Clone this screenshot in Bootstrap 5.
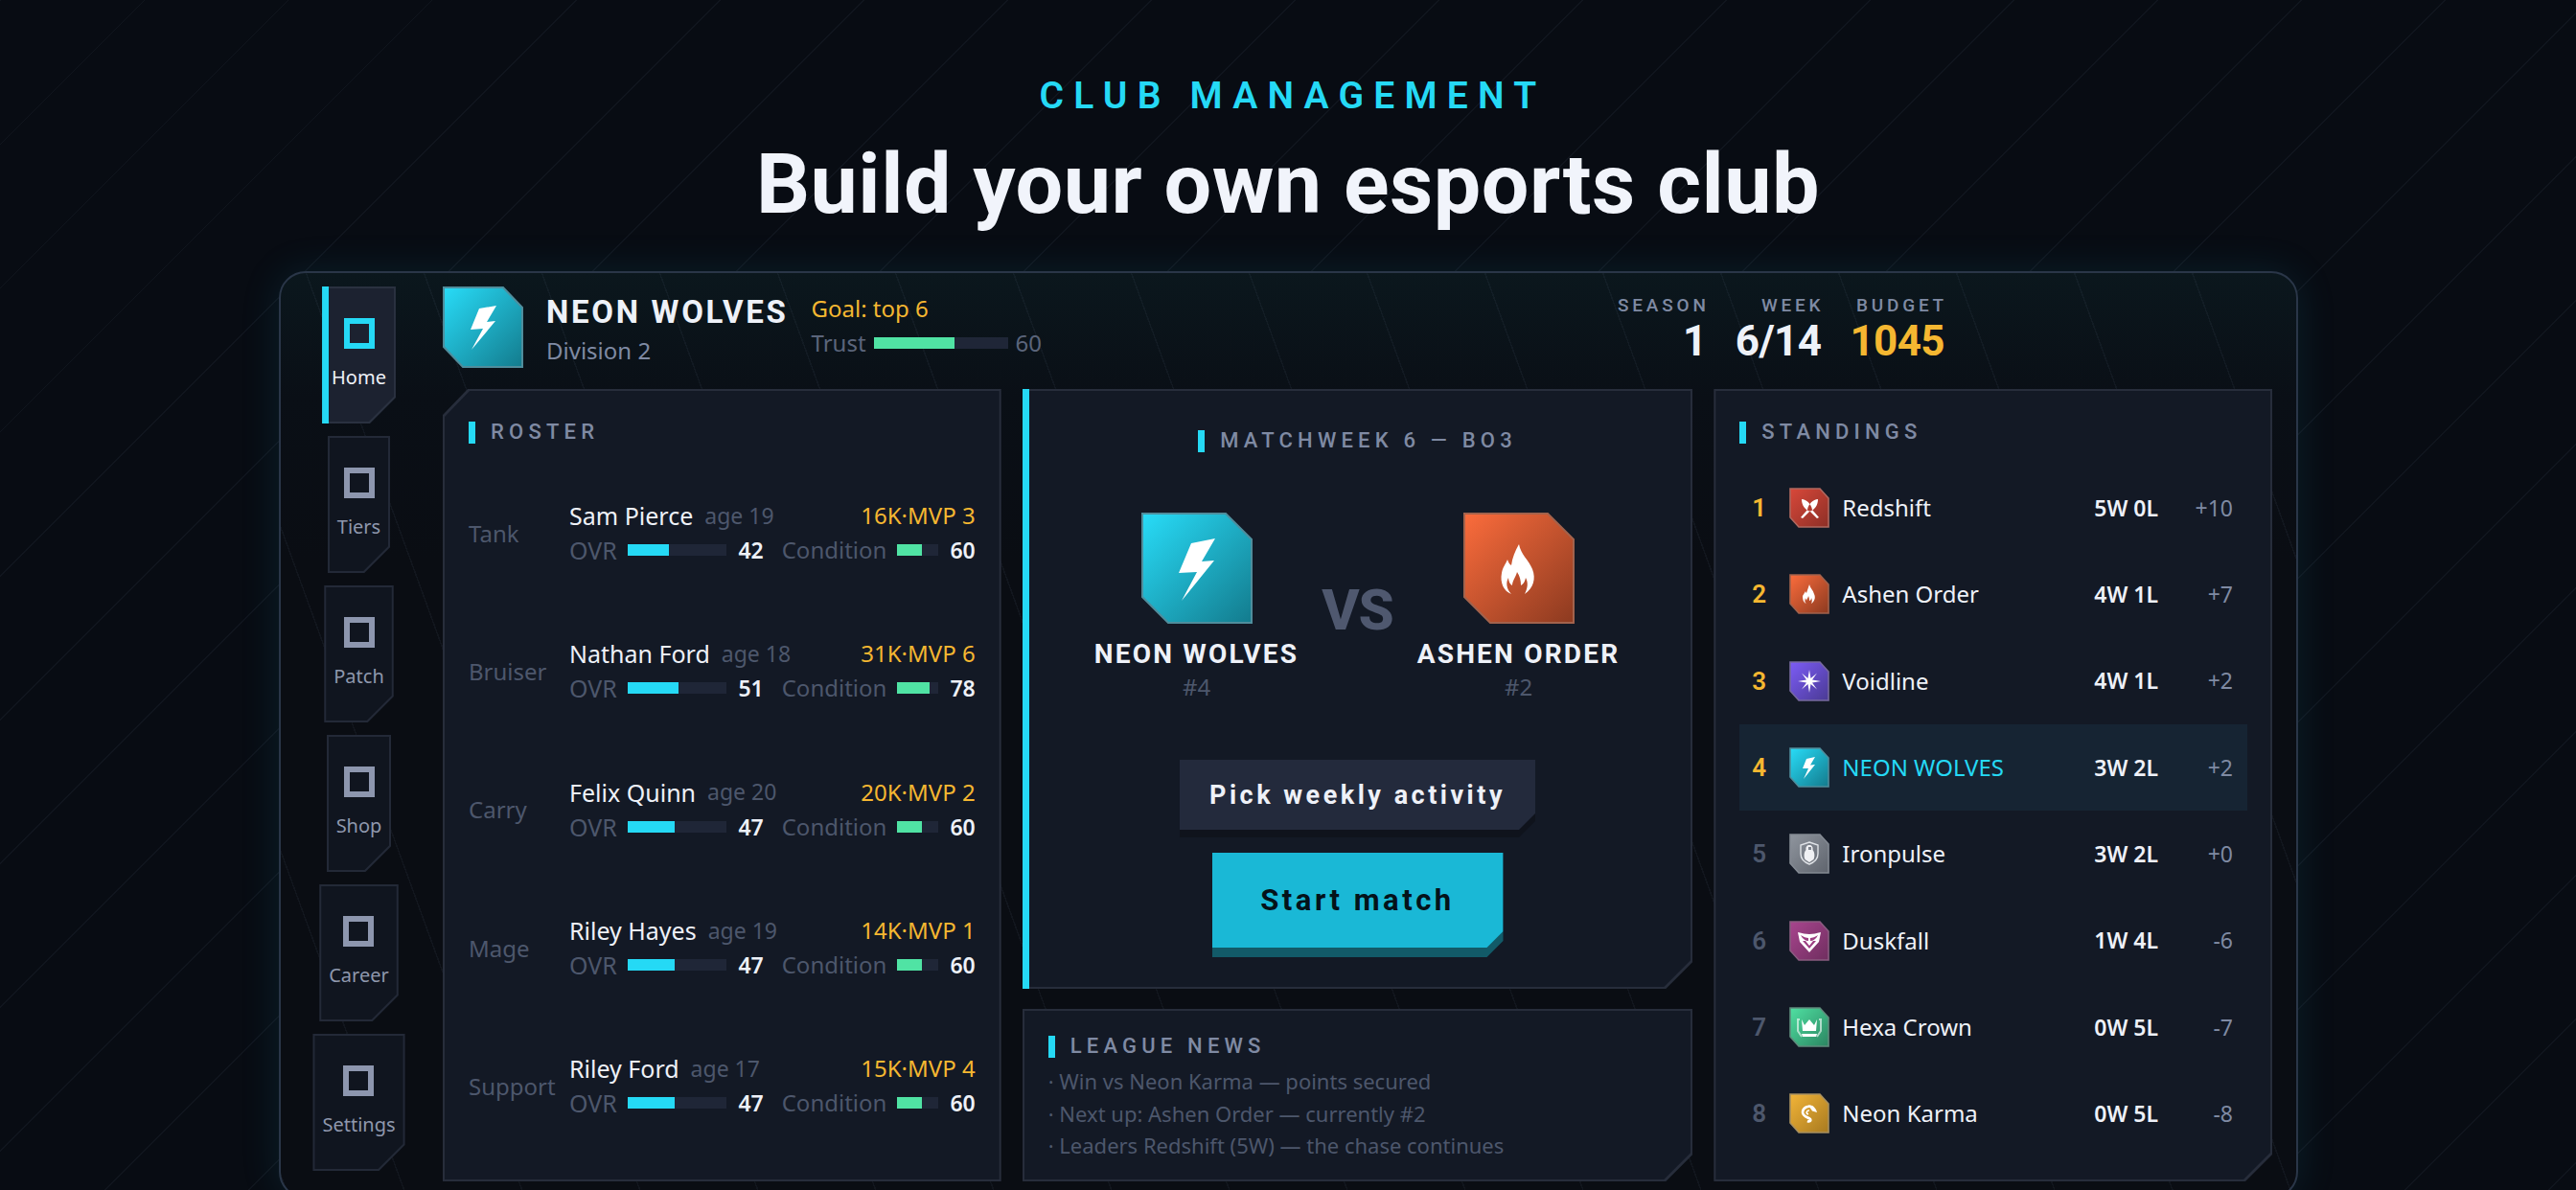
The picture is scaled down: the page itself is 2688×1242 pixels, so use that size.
<!DOCTYPE html>
<html lang="en">
<head>
  <meta charset="UTF-8" />
  <meta name="viewport" content="width=device-width, initial-scale=1" />
  <title>Build your own esports club</title>
  <link href="https://cdn.jsdelivr.net/npm/bootstrap@5.3.2/dist/css/bootstrap.min.css" rel="stylesheet"/>
  <style>
    :root {
      --cyan: #25d9f5;
      --gold: #f5b731;
      --green: #50e3a4;
      --soft: #7f8aa3;
      --dim: #4d576c;
      --ink: #eef1f8;
      --head: "Roboto", "Liberation Sans", sans-serif;
      --text: "Noto Sans", "Liberation Sans", sans-serif;
    }
    html, body { height: 1242px; overflow: hidden; }
    body {
      background-color: #080c13;
      background-image: repeating-linear-gradient(135deg, rgba(120,140,170,.07) 0, rgba(120,140,170,.07) 1.4px, transparent 1.4px, transparent 106.07px);
      font-family: var(--text);
      color: var(--ink);
    }
    .hero { height: 283px; padding-top: 73px; }
    .kicker { font: 600 39px/54px var(--head); letter-spacing: 10.2px; color: var(--cyan); margin-right: -10px; }
    .hero-title { font: 700 88px/100px var(--head); letter-spacing: .5px; color: #f1f4fb; margin: 15px 0 0; }
    .frame {
      width: 2107px; height: 968px; margin-left: 291px; padding: 14px 24px 16px 0;
      border: 2px solid #2a3648; border-radius: 28px;
      background-color: #0a0d13;
      background-image:
        repeating-linear-gradient(70deg, transparent 0, transparent 7px, rgba(120,140,170,.07) 7px, rgba(120,140,170,.07) 8.4px, transparent 8.4px, transparent 115.6px),
        linear-gradient(180deg, #0b171d 0, #0a0f16 130px, #0a0d13 300px);
      box-shadow: 0 0 42px rgba(30,160,190,.13);
    }
    .side { width: 163px; margin-right: 6px; gap: 13px; }
    .tab {
      position: relative; height: 143px; padding: 33px 10px 0; color: #8f98ad; font-size: 20px; line-height: 28px;
      background: #232937;
      clip-path: polygon(0 0, 100% 0, 100% calc(100% - 27px), calc(100% - 27px) 100%, 0 100%);
    }
    .tab::before {
      content: ""; position: absolute; inset: 2px; background: #10151f;
      clip-path: polygon(0 0, 100% 0, 100% calc(100% - 26px), calc(100% - 26px) 100%, 0 100%);
    }
    .tab > * { position: relative; }
    .tab-on { color: var(--ink); background: #2a3140; }
    .tab-on::before { background: #1c2230; }
    .tab-on::after { content: ""; position: absolute; left: 0; top: 0; bottom: 0; width: 7px; background: var(--cyan); }
    .tab-mark { width: 32px; height: 32px; border: 6px solid #8d96ae; margin: 0 auto 16px; }
    .tab-on .tab-mark { border-color: var(--cyan); }
    .main-col { width: 1909px; }
    .topbar { height: 107px; }
    .crest { flex: none; display: block; }
    .club-name { font: 700 33px/36px var(--head); letter-spacing: 2.7px; color: var(--ink); margin-top: 1px; }
    .club-div { font-size: 24px; line-height: 30px; color: var(--soft); margin-top: 7px; }
    .goal-box { margin-left: 24px; font-size: 24px; }
    .goal-text { color: var(--gold); line-height: 30px; }
    .trust-text { color: #5b657b; line-height: 30px; margin-top: 6px; }
    .track { background: #1f2637; height: 12px; }
    .track > div { height: 100%; }
    .fill-c { background: var(--cyan); }
    .fill-g { background: var(--green); }
    .stat-row { margin-left: auto; margin-right: 342px; gap: 30px; text-align: right; }
    .stat-lbl { font: 500 19px/24px var(--head); letter-spacing: 3.8px; color: var(--soft); margin-right: -3px; }
    .stat-val { font: 700 44px/46px var(--head); letter-spacing: -.6px; color: var(--ink); margin-top: 2px; }
    .panes { gap: 22px; height: 827px; }
    .pane { position: relative; background: #272d3b; }
    .pane::before { content: ""; position: absolute; inset: 2px; background: #131925; clip-path: inherit; }
    .pane > * { position: relative; }
    .cut-tl { clip-path: polygon(26px 0, 100% 0, 100% 100%, 0 100%, 0 27px); }
    .cut-br { clip-path: polygon(0 0, 100% 0, 100% calc(100% - 28px), calc(100% - 28px) 100%, 0 100%); }
    .pane-title { font: 500 22px/24px var(--head); letter-spacing: 5.2px; color: var(--soft); }
    .pane-title::before { content: ""; width: 7px; height: 23px; background: var(--cyan); margin-right: 16px; }
    .roster { width: 583px; padding: 33px 27px 0; }
    .roster-list { margin-top: 20px; }
    .roster-row { height: 144.3px; }
    .pos { width: 105px; flex: none; font-size: 24px; color: var(--dim); padding-top: 3px; }
    .nm { font-size: 25px; line-height: 32px; color: var(--ink); }
    .yrs { font-size: 23px; color: var(--dim); margin-left: 12px; }
    .pay { font-size: 24px; color: var(--gold); margin-left: auto; }
    .stat-line { font-size: 25px; line-height: 32px; color: var(--dim); margin-top: 2px; }
    .stat-line .track.ms-2 { margin-left: 11px !important; }
    .num { font-size: 23px; font-weight: 600; color: var(--ink); margin-left: 12px; }
    .cond { width: 202px; flex: none; margin-left: 19px; font-size: 24px; }
    .mid { width: 700px; gap: 21px; }
    .match { height: 626px; padding-top: 42px; }
    .match::after { content: ""; position: absolute; left: 0; top: 0; bottom: 0; width: 7px; background: var(--cyan); }
    .team-line { margin-top: 63px; }
    .team { width: 230px; }
    .team-name { font: 700 28px/32px var(--head); letter-spacing: 2.2px; color: var(--ink); margin-top: 16px; white-space: nowrap; }
    .team-rank { font-size: 24px; line-height: 30px; color: var(--dim); margin-top: 3px; }
    .vs { font: 800 60px/60px var(--head); letter-spacing: -1px; color: #4f586f; padding-top: 72px; width: 106px; }
    .act-stack { margin-top: 61px; }
    .act { display: block; border: 0; font-family: var(--head); font-weight: 700; position: relative; }
    .act-plain { width: 371px; height: 81px; padding-bottom: 8px; background: #0f131c; color: var(--ink); font-size: 27px; letter-spacing: 3.5px; clip-path: polygon(0 0, 100% 0, 100% calc(100% - 17px), calc(100% - 17px) 100%, 0 100%); }
    .act-plain::before { content: ""; position: absolute; left: 0; top: 0; right: 0; height: 73px; background: #232a3c; clip-path: inherit; }
    .act-main { width: 304px; height: 109px; padding-bottom: 10px; background: #125a68; color: #04121a; font-size: 31px; letter-spacing: 3.5px; clip-path: polygon(0 0, 100% 0, 100% calc(100% - 17px), calc(100% - 17px) 100%, 0 100%); }
    .act-main::before { content: ""; position: absolute; left: 0; top: 0; right: 0; height: 99px; background: #1ab8d6; clip-path: polygon(0 0, 100% 0, 100% calc(100% - 17px), calc(100% - 17px) 100%, 0 100%); }
    .act span { position: relative; }
    .news { height: 180px; padding: 27px 27px 0; }
    .news-line { font-size: 22px; line-height: 33.5px; color: var(--dim); }
    .table-pane { width: 583px; padding: 33px 26px 0 27px; }
    .std-list { margin-top: 22px; }
    .std-row { height: 90.3px; padding: 0 15px 0 13px; }
    .std-row-on { background: #162433; }
    .rk { width: 39px; flex: none; font: 600 26px var(--head); color: var(--gold); }
    .rk-low { color: var(--dim); }
    .tm { margin-left: 13px; font-size: 24px; color: var(--ink); }
    .tm-on { color: var(--cyan); }
    .wl { margin-left: auto; font-size: 23px; font-weight: 600; color: var(--ink); }
    .diff { width: 78px; text-align: right; font-size: 23px; color: var(--soft); }
  </style>
</head>
<body>

  <div class="hero text-center">
    <div class="kicker">CLUB MANAGEMENT</div>
    <h1 class="hero-title">Build your own esports club</h1>
  </div>

  <div class="frame d-flex">
    <div class="side d-flex flex-column align-items-center flex-none" id="sideNav"></div>

    <div class="main-col">
      <div class="topbar d-flex align-items-start">
        <svg class="crest" width="84" height="85" viewBox="0 0 84 85"><defs><linearGradient id="hdr" x1="0" y1="0" x2="1" y2="1"><stop offset="0" stop-color="#28dcf8"/><stop offset="1" stop-color="#137b8d"/></linearGradient></defs><polygon points="1,1 63,1 83,22 83,84 21,84 1,63" fill="url(#hdr)" stroke="#4f8d9c" stroke-width="2"/><polygon points="56,20 38,23 29,45 42,44 30,66 55,36 46,37" fill="#fff"/></svg>
        <div class="ms-3 ps-2 mt-2">
          <div class="club-name">NEON WOLVES</div>
          <div class="club-div">Division 2</div>
        </div>
        <div class="goal-box mt-2">
          <div class="goal-text">Goal: top 6</div>
          <div class="trust-text d-flex align-items-center">Trust
            <div class="track mx-2" style="width:140px"><div class="fill-g" style="width:60%"></div></div>60
          </div>
        </div>
        <div class="stat-row d-flex mt-2">
          <div><div class="stat-lbl">SEASON</div><div class="stat-val">1</div></div>
          <div><div class="stat-lbl">WEEK</div><div class="stat-val">6/14</div></div>
          <div><div class="stat-lbl">BUDGET</div><div class="stat-val" style="color:#f5b731">1045</div></div>
        </div>
      </div>

      <div class="panes d-flex">
        <div class="pane cut-tl roster">
          <div class="pane-title d-flex align-items-center">ROSTER</div>
          <div class="roster-list" id="rosterList"></div>
        </div>

        <div class="mid d-flex flex-column">
          <div class="pane cut-br match">
            <div class="pane-title d-flex align-items-center justify-content-center">MATCHWEEK 6 — BO3</div>
            <div class="team-line d-flex justify-content-center align-items-start">
              <div class="team d-flex flex-column align-items-center">
                <svg class="crest" width="116" height="116" viewBox="0 0 116 116"><defs><linearGradient id="teamA" x1="0" y1="0" x2="1" y2="1"><stop offset="0" stop-color="#28dcf8"/><stop offset="1" stop-color="#137b8d"/></linearGradient></defs><polygon points="1,1 88,1 115,28 115,115 28,115 1,88" fill="url(#teamA)" stroke="#4f8d9c" stroke-width="2"/><polygon points="77,27 52,32 39,63 58,62 42,92 76,50 63,51" fill="#fff"/></svg>
                <div class="team-name">NEON WOLVES</div>
                <div class="team-rank">#4</div>
              </div>
              <div class="vs text-center">VS</div>
              <div class="team d-flex flex-column align-items-center">
                <svg class="crest" width="116" height="116" viewBox="0 0 116 116"><defs><linearGradient id="teamB" x1="0" y1="0" x2="1" y2="1"><stop offset="0" stop-color="#fb6c3c"/><stop offset="1" stop-color="#8c3a20"/></linearGradient></defs><polygon points="1,1 88,1 115,28 115,115 28,115 1,88" fill="url(#teamB)" stroke="#a2624c" stroke-width="2"/><path d="M58 33C60 44 68 49 72 59C76 69 73 79 64 85C67 79 68 73 65 68C64 73 62 75 60 76C60 71 59 66 56 62C55 67 51 71 51 76C49 75 47 72 47 68C44 73 45 80 50 85C42 82 38 73 40 63C41 57 44 54 46 49C47 52 48 54 50 55C51 47 54 40 58 33Z" fill="#fff"/></svg>
                <div class="team-name">ASHEN ORDER</div>
                <div class="team-rank">#2</div>
              </div>
            </div>
            <div class="act-stack d-flex flex-column align-items-center">
              <button class="act act-plain"><span>Pick weekly activity</span></button>
              <button class="act act-main mt-3"><span>Start match</span></button>
            </div>
          </div>

          <div class="pane cut-br news">
            <div class="pane-title d-flex align-items-center mb-2">LEAGUE NEWS</div>
            <div class="news-line">· Win vs Neon Karma — points secured</div>
            <div class="news-line">· Next up: Ashen Order — currently #2</div>
            <div class="news-line">· Leaders Redshift (5W) — the chase continues</div>
          </div>
        </div>

        <div class="pane cut-br table-pane">
          <div class="pane-title d-flex align-items-center">STANDINGS</div>
          <div class="std-list" id="standings"></div>
        </div>
      </div>
    </div>
  </div>

  <script>
    const tabs = ["Home", "Tiers", "Patch", "Shop", "Career", "Settings"];
    document.getElementById("sideNav").innerHTML = tabs.map((t, i) => `
      <div class="tab text-center ${i === 0 ? "tab-on" : ""}">
        <div class="tab-mark"></div><div>${t}</div>
      </div>`).join("");

    const players = [
      ["Tank", "Sam Pierce", 19, "16K·MVP 3", 42, 60],
      ["Bruiser", "Nathan Ford", 18, "31K·MVP 6", 51, 78],
      ["Carry", "Felix Quinn", 20, "20K·MVP 2", 47, 60],
      ["Mage", "Riley Hayes", 19, "14K·MVP 1", 47, 60],
      ["Support", "Riley Ford", 17, "15K·MVP 4", 47, 60]
    ];
    document.getElementById("rosterList").innerHTML = players.map(p => `
      <div class="roster-row d-flex align-items-center">
        <div class="pos">${p[0]}</div>
        <div class="flex-grow-1">
          <div class="d-flex align-items-center">
            <span class="nm">${p[1]}</span><span class="yrs">age ${p[2]}</span><span class="pay">${p[3]}</span>
          </div>
          <div class="stat-line d-flex align-items-center">
            <span>OVR</span>
            <div class="track flex-grow-1 ms-2"><div class="fill-c" style="width:${p[4]}%"></div></div>
            <span class="num">${p[4]}</span>
            <div class="cond d-flex align-items-center">
              <span>Condition</span>
              <div class="track flex-grow-1 ms-2"><div class="fill-g" style="width:${p[5]}%"></div></div>
              <span class="num">${p[5]}</span>
            </div>
          </div>
        </div>
      </div>`).join("");

    const sword = `<path d="M13 12C18 12 23 17 24 23L31 31L29 32L22 25C16 23 13 18 13 12ZM30 12C25 12 20 17 19 23L12 31L14 32L21 25C27 23 30 18 30 12Z" fill="#fff"/>`;
    const flame = `<path d="M21 11C22 15 25 17 26 21C28 25 26 29 23 31C24 29 24 27 23 25C23 27 22 28 21 28C21 27 21 25 20 23C20 25 18 26 18 28C18 27 17 26 17 25C16 27 16 30 18 31C15 30 14 27 14 23C15 21 16 20 17 18C17 19 18 20 18 20C19 17 20 14 21 11Z" fill="#fff"/>`;
    const star = `<polygon points="21,9 22.5,18 29,12.5 24,19.5 33,21 24,22.5 29,29.5 22.5,24 21,33 19.5,24 13,29.5 18,22.5 9,21 18,19.5 13,12.5 19.5,18" fill="#fff"/>`;
    const bolt = `<polygon points="27,10 18,12 14,22 20,22 15,33 27,18 22,18.5" fill="#fff"/>`;
    const shield = `<path d="M21 9L30 12V21C30 27 26 30 21 32C16 30 12 27 12 21V12Z" fill="none" stroke="#dfe2e6" stroke-width="1.4"/><path d="M21 12C23.5 12 25 14 24.5 17C26.5 19 27 24 25.5 27L21 30L16.5 27C15 24 15.5 19 17.5 17C17 14 18.5 12 21 12Z" fill="#f0f1f4"/><path d="M20 14H23V17H20Z" fill="#7e848e"/>`;
    const mask = `<path d="M9 12C14 13 17 14 21 14C25 14 28 13 33 12L31 22L21 33L11 22Z" fill="#fff"/><path d="M14 21L21 29L28 21L25 21L21 26L17 21ZM12 15C15 17 18 18 20 18V21C17 21 14 19 12 15ZM30 15C27 17 24 18 22 18V21C25 21 28 19 30 15Z" fill="#9c3f82"/>`;
    const crown = `<path d="M13 13L16 19L21 13L26 19L29 13L28 25H14Z" fill="#fff"/><path d="M13 28H29L28 31H14Z" fill="#fff"/><path d="M11 13H9V25L13 31M31 13H33V25L29 31" fill="none" stroke="#fff" stroke-opacity=".6" stroke-width="2"/>`;
    const snake = `<path d="M25 15C20 12 14 15 14 20C14 24 19 25 22 27C23 29 21 30 19 29" fill="none" stroke="#fff" stroke-width="2.6"/><path d="M20 12.5C24 12 28 15 29 20L24 18.5Z" fill="#fff"/><path d="M21 18C18 18 17 21 20 22" fill="none" stroke="#fff" stroke-width="1.6"/>`;

    const teams = [
      [1, "Redshift", "5W 0L", "+10", "#d8483a", "#8d2f26", "#b0685f", sword],
      [2, "Ashen Order", "4W 1L", "+7", "#fb6c3c", "#8c3a20", "#a2624c", flame],
      [3, "Voidline", "4W 1L", "+2", "#7c5cf6", "#4a3a94", "#77699f", star],
      [4, "NEON WOLVES", "3W 2L", "+2", "#28dcf8", "#137b8d", "#4f8d9c", bolt],
      [5, "Ironpulse", "3W 2L", "+0", "#8f959e", "#5f646d", "#848a93", shield],
      [6, "Duskfall", "1W 4L", "-6", "#a8458e", "#6f2e5f", "#8a5c80", mask],
      [7, "Hexa Crown", "0W 5L", "-7", "#4fe0a2", "#2b8561", "#5f8c7c", crown],
      [8, "Neon Karma", "0W 5L", "-8", "#f2b438", "#a87a20", "#a89060", snake]
    ];
    document.getElementById("standings").innerHTML = teams.map(t => `
      <div class="std-row d-flex align-items-center ${t[0] === 4 ? "std-row-on" : ""}">
        <div class="rk ${t[0] > 4 ? "rk-low" : ""}">${t[0]}</div>
        <svg class="crest" width="42" height="42" viewBox="0 0 42 42"><defs><linearGradient id="g${t[0]}" x1="0" y1="0" x2="1" y2="1"><stop offset="0" stop-color="${t[4]}"/><stop offset="1" stop-color="${t[5]}"/></linearGradient></defs><polygon points="1,1 32,1 41,11 41,41 10,41 1,31" fill="url(#g${t[0]})" stroke="${t[6]}" stroke-width="1.6"/>${t[7]}</svg>
        <div class="tm ${t[0] === 4 ? "tm-on" : ""}">${t[1]}</div>
        <div class="wl">${t[2]}</div>
        <div class="diff">${t[3]}</div>
      </div>`).join("");
  </script>

  <script src="https://cdn.jsdelivr.net/npm/bootstrap@5.3.2/dist/js/bootstrap.bundle.min.js"></script>
</body>
</html>
